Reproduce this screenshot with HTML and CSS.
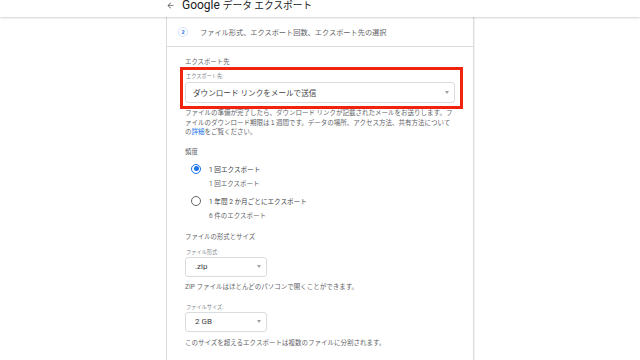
FILE: index.html
```html
<!DOCTYPE html>
<html lang="ja">
<head>
  <meta charset="UTF-8" />
  <meta name="viewport" content="width=device-width, initial-scale=1.0">
  <title>Google データ エクスポート</title>
  <link rel="stylesheet" href="styles.css">
</head>
<body>
  <header class="topbar">
    <div class="topbar-inner">
      <svg class="back" viewBox="0 0 24 24" width="9" height="9"><path d="M20 11H7.83l5.59-5.59L12 4l-8 8 8 8 1.41-1.41L7.83 13H20v-2z" fill="#5f6368"/></svg>
      <span class="title">Google <span class="title-jp">データ エクスポート</span></span>
    </div>
  </header>

  <div class="card">
    <div class="step">
      <span class="step-num">2</span>
      <span class="step-text">ファイル形式、エクスポート回数、エクスポート先の選択</span>
    </div>

    <div class="section">
      <p class="heading">エクスポート先</p>
      <div class="highlight">
        <p class="field-label">エクスポート先:</p>
        <div class="select wide">
          <span>ダウンロード リンクをメールで送信</span>
          <span class="caret"></span>
        </div>
      </div>
      <p class="desc">ファイルの準備が完了したら、ダウンロード リンクが記載されたメールをお送りします。ファイルのダウンロード期限は１週間です。データの場所、アクセス方法、共有方法についての<a href="#">詳細</a>をご覧ください。</p>

      <p class="heading freq">頻度</p>
      <div class="option">
        <div class="option-row">
          <span class="radio checked"></span>
          <span>1 回エクスポート</span>
        </div>
        <p class="option-sub">1 回エクスポート</p>
      </div>
      <div class="option">
        <div class="option-row">
          <span class="radio"></span>
          <span>1 年間 2 か月ごとにエクスポート</span>
        </div>
        <p class="option-sub">6 件のエクスポート</p>
      </div>

      <p class="heading format">ファイルの形式とサイズ</p>
      <div class="field">
        <p class="field-label">ファイル形式:</p>
        <div class="select small">
          <span>.zip</span>
          <span class="caret"></span>
        </div>
      </div>
      <p class="hint">ZIP ファイルはほとんどのパソコンで開くことができます。</p>
      <div class="field size">
        <p class="field-label">ファイルサイズ:</p>
        <div class="select small">
          <span>2 GB</span>
          <span class="caret"></span>
        </div>
      </div>
      <p class="hint last">このサイズを超えるエクスポートは複数のファイルに分割されます。</p>
    </div>
  </div>
</body>
</html>
```

FILE: styles.css
```css
body {
  margin: 0;
  background: #fff;
  font-family: Roboto, "Noto Sans CJK JP", sans-serif;
  color: #3c4043;
}
p {
  margin: 0;
}

/* ヘッダー */
.topbar {
  position: relative;
  z-index: 1;
  height: 17px;
  display: flex;
  align-items: flex-end;
  overflow: hidden;
  background: #fff;
  box-shadow: 0 1px 2px rgba(0,0,0,0.18);
}
.topbar-inner {
  width: 308px;
  margin: 0 auto;
  display: flex;
  align-items: center;
  gap: 7px;
  padding-bottom: 5px;
  box-sizing: border-box;
}
.title {
  font-size: 12px;
  line-height: 13px;
  color: #202124;
}
.title-jp {
  font-size: 9.7px;
}

/* カード */
.card {
  width: 308px;
  margin: 0 auto;
  border: 1px solid #dadce0;
  border-top: none;
  box-sizing: border-box;
  box-shadow: 1px 0 0 #f1f3f4;
}
.step {
  height: 29px;
  display: flex;
  align-items: center;
  gap: 12px;
  padding-left: 11px;
  border-bottom: 1px solid #dadce0;
}
.step-num {
  width: 10px;
  height: 10px;
  border: 1px solid #d2e3fc;
  border-radius: 50%;
  box-sizing: border-box;
  display: flex;
  align-items: center;
  justify-content: center;
  font-size: 5.5px;
  font-weight: bold;
  color: #1a73e8;
}
.step-text {
  font-size: 7.2px;
  color: #5f6368;
}

.section {
  padding: 10px 18px 20px 18px;
}
.heading {
  font-size: 6.4px;
  line-height: 10px;
  color: #5f6368;
}
.heading.freq {
  margin-top: 9px;
}
.heading.format {
  margin-top: 11px;
}

/* 赤い枠 */
.highlight {
  margin: 0 -8px 0 -5px;
  border: 3px solid #f2230e;
  padding: 2px 5px 3px 2px;
}
.field-label {
  font-size: 5.2px;
  line-height: 8px;
  color: #80868b;
  padding-left: 1px;
}
.select {
  margin-top: 1px;
  height: 21px;
  border: 1px solid #dadce0;
  border-radius: 3px;
  box-sizing: border-box;
  display: flex;
  align-items: center;
  justify-content: space-between;
  padding: 0 5px 0 7px;
  font-size: 7.6px;
  color: #3c4043;
}
.highlight .select {
  margin-top: 2px;
}
.select.small {
  width: 82px;
  height: 20px;
  padding-left: 9px;
  font-size: 8px;
}
.caret {
  width: 0;
  height: 0;
  border-left: 2.5px solid transparent;
  border-right: 2.5px solid transparent;
  border-top: 3px solid #9aa0a6;
}

.desc {
  font-size: 6.5px;
  line-height: 9.6px;
  color: #5f6368;
}
.desc a {
  color: #1a73e8;
  text-decoration: none;
}

/* ラジオ */
.option {
  margin-top: 5px;
  padding-left: 6px;
}
.option-row {
  height: 14px;
  display: flex;
  align-items: center;
  gap: 8px;
  font-size: 6.6px;
  color: #3c4043;
}
.radio {
  width: 10px;
  height: 10px;
  border: 1.5px solid #5f6368;
  border-radius: 50%;
  box-sizing: border-box;
  display: flex;
  align-items: center;
  justify-content: center;
}
.radio.checked {
  border-color: #1a73e8;
}
.radio.checked::after {
  content: "";
  width: 5px;
  height: 5px;
  border-radius: 50%;
  background: #1a73e8;
}
.option-sub {
  margin-top: 3px;
  padding-left: 18px;
  font-size: 6.5px;
  line-height: 10px;
  color: #5f6368;
}

.field {
  margin-top: 6px;
}
.field.size {
  margin-top: 11px;
}
.hint {
  margin-top: 5px;
  font-size: 6.5px;
  line-height: 10px;
  color: #5f6368;
}
.hint.last {
  margin-top: 6px;
}
```
